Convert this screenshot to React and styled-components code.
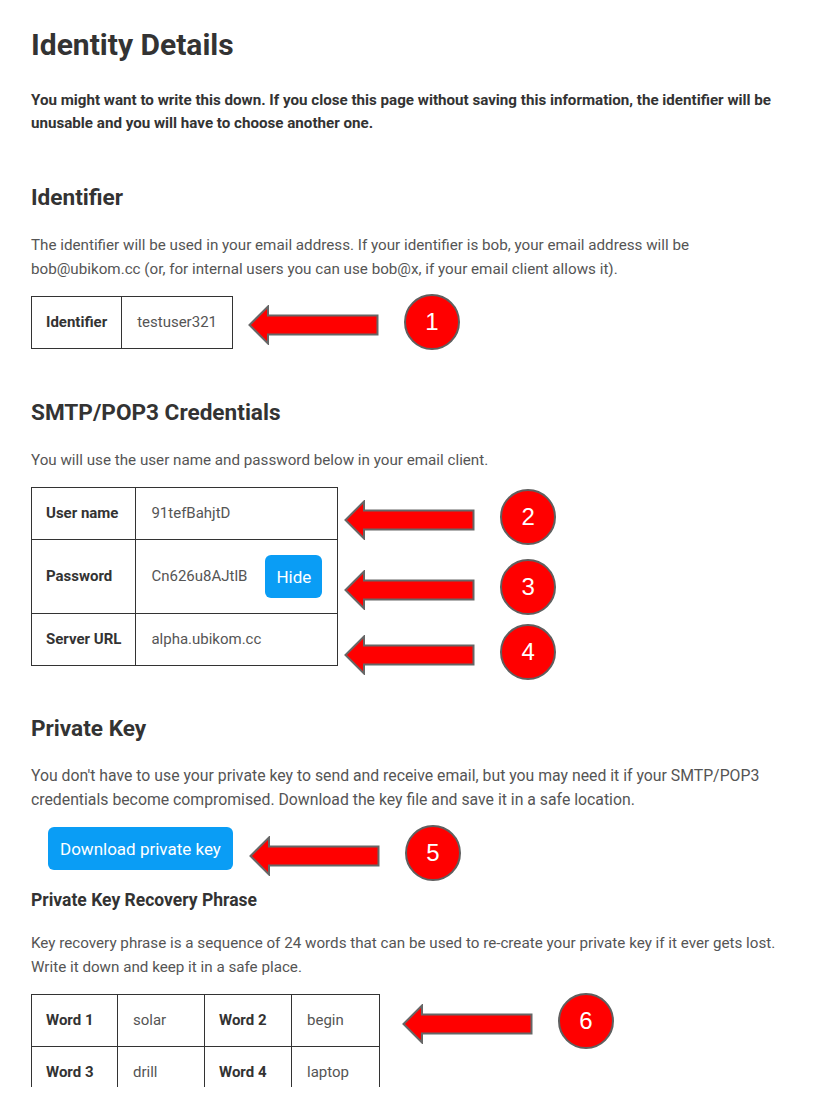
import styled, { createGlobalStyle } from 'styled-components'

const GlobalStyle = createGlobalStyle`
  html, body {
    margin: 0;
    padding: 0;
    background: #fff;
    overflow: hidden;
  }
  body {
    font-family: Roboto, 'Liberation Sans', sans-serif;
    color: #333;
  }
`;

const Page = styled.main`
  width: 819px;
  box-sizing: border-box;
  padding: 27px 31px 0 31px;
`;

const Title = styled.h1`
  margin: 0;
  font-size: 30px;
  line-height: 36px;
  font-weight: 700;
  color: #333;
`;

const Lead = styled.p`
  margin: 26px 0 0;
  font-size: 15.15px;
  line-height: 23px;
  font-weight: 700;
  color: #333;
`;

const Heading = styled.h2`
  margin: ${p => p.$mt}px 0 0;
  font-size: 22.6px;
  line-height: 28px;
  font-weight: 700;
  color: #333;
`;

const SubHeading = styled.h3`
  margin: ${p => p.$mt}px 0 0;
  font-size: 17.5px;
  line-height: 22px;
  font-weight: 700;
  color: #333;
`;

const Text = styled.p`
  margin: ${p => p.$mt}px 0 0;
  font-size: ${p => p.$size || 15.2}px;
  line-height: 24px;
  color: #555;
`;

const Row = styled.div`
  display: flex;
  align-items: ${p => p.$align || 'flex-start'};
  gap: ${p => p.$gap}px;
  margin-top: ${p => p.$mt}px;
`;

const Table = styled.table`
  border-collapse: collapse;
  table-layout: ${p => (p.$fixed ? 'fixed' : 'auto')};
`;

const Label = styled.th`
  border: 1px solid #333;
  padding: 15px 14px;
  font-size: 15px;
  line-height: 21px;
  font-weight: 700;
  color: #333;
  text-align: left;
  white-space: nowrap;
`;

const Value = styled.td`
  border: 1px solid #333;
  padding: 15px 15px;
  font-size: 15px;
  line-height: 21px;
  color: #555;
  white-space: nowrap;
`;

const CellInner = styled.div`
  display: flex;
  align-items: center;
  gap: 18px;
`;

const Button = styled.button`
  border: none;
  border-radius: 6px;
  background: #0a9df5;
  color: #fff;
  font-family: Roboto, 'Liberation Sans', sans-serif;
  font-size: 17px;
  height: 43px;
  padding: 0 ${p => p.$px}px;
  margin-top: ${p => p.$mt || 0}px;
  margin-left: ${p => p.$ml || 0}px;
  cursor: pointer;
`;

const Clip = styled.div`
  height: 93px;
  overflow: hidden;
  margin-top: 1px;
`;

const Stack = styled.div`
  display: flex;
  flex-direction: column;
`;

const CalloutWrap = styled.div`
  display: flex;
  align-items: center;
  gap: 25px;
  margin-top: ${p => p.$mt || 0}px;
`;

const ArrowSvg = styled.svg`
  display: block;
  margin-top: 6px;
`;

const Badge = styled.div`
  width: 56px;
  height: 56px;
  box-sizing: border-box;
  border-radius: 50%;
  background: #ff0000;
  border: 2px solid #5f5f5f;
  color: #fff;
  font-family: 'Liberation Sans', Arial, sans-serif;
  font-size: 24px;
  display: flex;
  align-items: center;
  justify-content: center;
`;

function Callout({ n, mt }) {
  return (
    <CalloutWrap $mt={mt}>
      <ArrowSvg width="131" height="40" viewBox="0 0 131 40">
        <polygon
          points="1.5,20 20,1.5 20,10.5 129.5,10.5 129.5,29.5 20,29.5 20,38.5"
          fill="#ff0000"
          stroke="#666"
          strokeWidth="2"
          strokeLinejoin="miter"
        />
      </ArrowSvg>
      <Badge>{n}</Badge>
    </CalloutWrap>
  );
}

const words = [
  ['solar', 'begin'],
  ['drill', 'laptop'],
];

export default function App() {
  return (
    <Page>
      <GlobalStyle />
      <Title>Identity Details</Title>
      <Lead>
        You might want to write this down. If you close this page without saving this information, the identifier will be
        unusable and you will have to choose another one.
      </Lead>

      <Heading $mt={49}>Identifier</Heading>
      <Text $mt={21}>
        The identifier will be used in your email address. If your identifier is bob, your email address will be
        bob@ubikom.cc (or, for internal users you can use bob@x, if your email client allows it).
      </Text>
      <Row $align="center" $gap={15} $mt={13}>
        <Table>
          <tbody>
            <tr>
              <Label>Identifier</Label>
              <Value>testuser321</Value>
            </tr>
          </tbody>
        </Table>
        <Callout n="1" />
      </Row>

      <Heading $mt={49}>SMTP/POP3 Credentials</Heading>
      <Text $mt={21}>You will use the user name and password below in your email client.</Text>
      <Row $gap={6} $mt={15}>
        <Table>
          <tbody>
            <tr>
              <Label>User name</Label>
              <Value>91tefBahjtD</Value>
            </tr>
            <tr>
              <Label>Password</Label>
              <Value>
                <CellInner>
                  Cn626u8AJtlB
                  <Button $px={11}>Hide</Button>
                </CellInner>
              </Value>
            </tr>
            <tr>
              <Label>Server URL</Label>
              <Value>alpha.ubikom.cc</Value>
            </tr>
          </tbody>
        </Table>
        <Stack>
          <Callout n="2" mt={2} />
          <Callout n="3" mt={14} />
          <Callout n="4" mt={9} />
        </Stack>
      </Row>

      <Heading $mt={35}>Private Key</Heading>
      <Text $mt={21} $size={15.8}>
        You don't have to use your private key to send and receive email, but you may need it if your SMTP/POP3
        credentials become compromised. Download the key file and save it in a safe location.
      </Text>
      <Row $gap={16} $mt={13}>
        <Button $px={12} $mt={2} $ml={17}>Download private key</Button>
        <Callout n="5" />
      </Row>

      <SubHeading $mt={8}>Private Key Recovery Phrase</SubHeading>
      <Text $mt={20} $size={15.2}>
        Key recovery phrase is a sequence of 24 words that can be used to re-create your private key if it ever gets lost.
        Write it down and keep it in a safe place.
      </Text>
      <Row $gap={22} $mt={14}>
        <Clip>
          <Table $fixed style={{ width: 348 }}>
            <colgroup>
              <col style={{ width: 86 }} />
              <col style={{ width: 87 }} />
              <col style={{ width: 87 }} />
              <col style={{ width: 88 }} />
            </colgroup>
            <tbody>
              {words.map((pair, i) => (
                <tr key={i}>
                  <Label>Word {i * 2 + 1}</Label>
                  <Value>{pair[0]}</Value>
                  <Label>Word {i * 2 + 2}</Label>
                  <Value>{pair[1]}</Value>
                </tr>
              ))}
            </tbody>
          </Table>
        </Clip>
        <Callout n="6" />
      </Row>
    </Page>
  );
}
